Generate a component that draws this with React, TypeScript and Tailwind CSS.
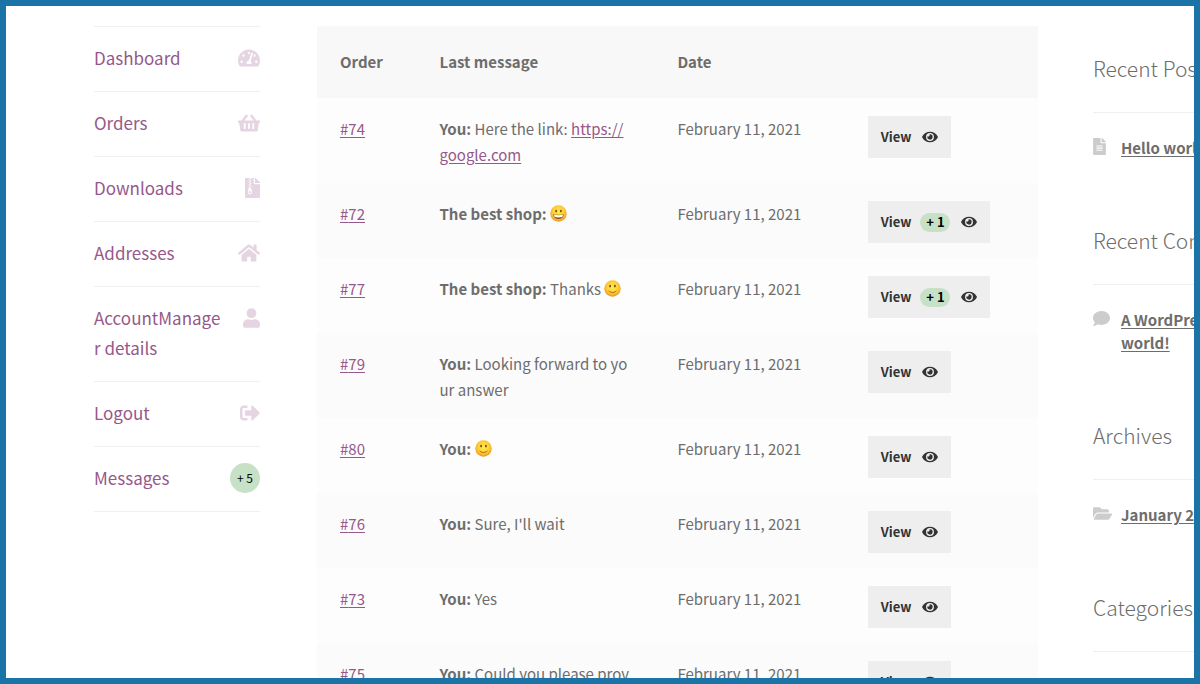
import type { ReactNode } from "react";
import {
  FaComment,
  FaEye,
  FaFileAlt,
  FaFileArchive,
  FaFolderOpen,
  FaHome,
  FaShoppingBasket,
  FaSignOutAlt,
  FaTachometerAlt,
  FaUser,
} from "react-icons/fa";

const navIcon = "mt-[5px] h-5 shrink-0 text-[#e5d5e2]";

const navItems: { label: string; icon: ReactNode }[] = [
  { label: "Dashboard", icon: <FaTachometerAlt className={`${navIcon} w-[22px]`} /> },
  { label: "Orders", icon: <FaShoppingBasket className={`${navIcon} w-[22px]`} /> },
  { label: "Downloads", icon: <FaFileArchive className={`${navIcon} w-[15px]`} /> },
  { label: "Addresses", icon: <FaHome className={`${navIcon} w-[22px]`} /> },
  { label: "AccountManager details", icon: <FaUser className={`${navIcon} w-[17px]`} /> },
  { label: "Logout", icon: <FaSignOutAlt className={`${navIcon} w-5`} /> },
  {
    label: "Messages",
    icon: (
      <span className="flex size-[30px] shrink-0 items-center justify-center rounded-full bg-[#c6e1c6] text-xs text-black">
        + 5
      </span>
    ),
  },
];

function Emoji({ grin = false }: { grin?: boolean }) {
  const id = grin ? "face-grin" : "face-smile";
  return (
    <svg
      viewBox="0 0 32 32"
      role="img"
      aria-label={grin ? "grinning face" : "slightly smiling face"}
      className="mb-1 inline-block size-[17px]"
    >
      <defs>
        <radialGradient id={id} cx="50%" cy="42%" r="58%">
          <stop offset="0" stopColor="#ffe94f" />
          <stop offset="0.6" stopColor="#fdcf36" />
          <stop offset="1" stopColor="#ee9420" />
        </radialGradient>
      </defs>
      <circle cx="16" cy="16" r="15.5" fill={`url(#${id})`} />
      <ellipse cx="11.5" cy="11.5" rx="1.6" ry="2.5" fill="#6b3c0c" />
      <ellipse cx="20.5" cy="11.5" rx="1.6" ry="2.5" fill="#6b3c0c" />
      {grin ? (
        <>
          <path d="M6 17.5c6.600 1.300 13.400 1.300 20 0-.4 5.600-4.400 9-10 9s-9.600-3.400-10-9z" fill="#8a5216" />
          <path d="M7.500 18.500c5.600 1 11.400 1 17 0-.2 2-.8 3.400-1.600 4.200-4.600.9-9.200.9-13.800 0-.8-.8-1.400-2.200-1.600-4.200z" fill="#fff" />
        </>
      ) : (
        <path d="M9.500 21c3.800 3.600 9.200 3.600 13 0" fill="none" stroke="#9a5c14" strokeWidth="1.8" strokeLinecap="round" />
      )}
    </svg>
  );
}

type Row = { id: number; from: string; body: ReactNode; unread?: number };

const linkStyle = "text-[#96588a] underline underline-offset-2";

const rows: Row[] = [
  {
    id: 74,
    from: "You:",
    body: (
      <>
        Here the link:{" "}
        <a href="https://google.com" className={`${linkStyle} break-normal`}>
          https://
          <wbr />
          google.com
        </a>
      </>
    ),
  },
  { id: 72, from: "The best shop:", body: <Emoji grin />, unread: 1 },
  { id: 77, from: "The best shop:", body: <>Thanks <Emoji /></>, unread: 1 },
  { id: 79, from: "You:", body: "Looking forward to your answer" },
  { id: 80, from: "You:", body: <Emoji /> },
  { id: 76, from: "You:", body: "Sure, I'll wait" },
  { id: 73, from: "You:", body: "Yes" },
  { id: 75, from: "You:", body: "Could you please provide more details" },
];

const widgetIcon = "mt-[2px] h-[17px] text-[#cccccc]";

const widgets: { title: string; icon?: ReactNode; link?: ReactNode }[] = [
  {
    title: "Recent Posts",
    icon: <FaFileAlt className={`${widgetIcon} w-[13px]`} />,
    link: "Hello world!",
  },
  {
    title: "Recent Comments",
    icon: <FaComment className={`${widgetIcon} w-[17px]`} />,
    link: (
      <>
        A WordPress Commenter
        <br />
        world!
      </>
    ),
  },
  {
    title: "Archives",
    icon: <FaFolderOpen className={`${widgetIcon} w-[19px]`} />,
    link: "January 2021",
  },
  { title: "Categories" },
];

function AccountNav() {
  return (
    <nav aria-label="Account" className="w-[166px] shrink-0">
      <ul className="border-t border-[#f0f0f0]">
        {navItems.map((item) => (
          <li key={item.label} className="border-b border-[#f0f0f0]">
            <a
              href="#"
              className="flex items-start justify-between gap-2 pt-4 pb-[18px] text-[17px] leading-[30px] text-[#96588a]"
            >
              <span className="min-w-0 max-w-[130px] break-all">{item.label}</span>
              {item.icon}
            </a>
          </li>
        ))}
      </ul>
    </nav>
  );
}

function MessagesTable() {
  return (
    <main className="min-w-0 flex-1">
      <table className="w-full table-fixed border-collapse text-left text-[15px] leading-[26px]">
        <thead className="bg-[#f8f8f8]">
          <tr>
            <th className="w-[13.8%] py-[23px] pl-[23px] font-bold">Order</th>
            <th className="w-[33%] py-[23px] pl-[23px] font-bold">Last message</th>
            <th className="w-[26.4%] py-[23px] pl-[23px] font-bold">Date</th>
            <th className="py-[23px] pl-[23px]" aria-label="Actions" />
          </tr>
        </thead>
        <tbody>
          {rows.map((row) => (
            <tr key={row.id} className="bg-[#fdfdfd] align-top even:bg-[#fbfbfb]">
              <td className="pt-[18px] pb-[15px] pl-[23px]">
                <a href="#" className={linkStyle}>#{row.id}</a>
              </td>
              <td className="px-[23px] pt-[18px] pb-[15px] break-all">
                <strong className="font-bold">{row.from}</strong> {row.body}
              </td>
              <td className="pt-[18px] pb-[15px] pl-[23px]">February 11, 2021</td>
              <td className="pt-[18px] pb-[15px] pl-[23px]">
                <button
                  type="button"
                  className="flex h-[42px] items-center bg-[#eeeeee] px-[13px] text-[13px] font-bold text-[#333333]"
                >
                  View
                  {row.unread && (
                    <span className="ml-[9px] flex h-[19px] w-[30px] items-center justify-center rounded-full bg-[#c6e1c6] text-black">
                      + {row.unread}
                    </span>
                  )}
                  <FaEye className="ml-[11px] h-[14px] w-4" />
                </button>
              </td>
            </tr>
          ))}
        </tbody>
      </table>
    </main>
  );
}

function WidgetSidebar() {
  return (
    <aside className="-mr-[127px] flex w-[228px] shrink-0 flex-col gap-[66px] pt-[27px]">
      {widgets.map((widget) => (
        <section key={widget.title}>
          <h2 className="border-b border-[#f0f0f0] pb-7 text-[21px] leading-[31px] font-light whitespace-nowrap">
            {widget.title}
          </h2>
          {widget.link && (
            <div className="grid grid-cols-[28px_1fr] pt-[23px] text-[15px] leading-[23px]">
              {widget.icon}
              <a href="#" className="font-bold whitespace-nowrap underline underline-offset-2">
                {widget.link}
              </a>
            </div>
          )}
        </section>
      ))}
    </aside>
  );
}

export default function App() {
  return (
    <div className="flex h-screen items-start overflow-hidden border-[6px] border-[#1a74a8] bg-white pt-5 pl-[88px] font-['Noto_Sans_CJK_SC',sans-serif] text-[#6d6d6d]">
      <AccountNav />
      <div className="w-[57px] shrink-0" />
      <MessagesTable />
      <div className="w-[55px] shrink-0" />
      <WidgetSidebar />
    </div>
  );
}
